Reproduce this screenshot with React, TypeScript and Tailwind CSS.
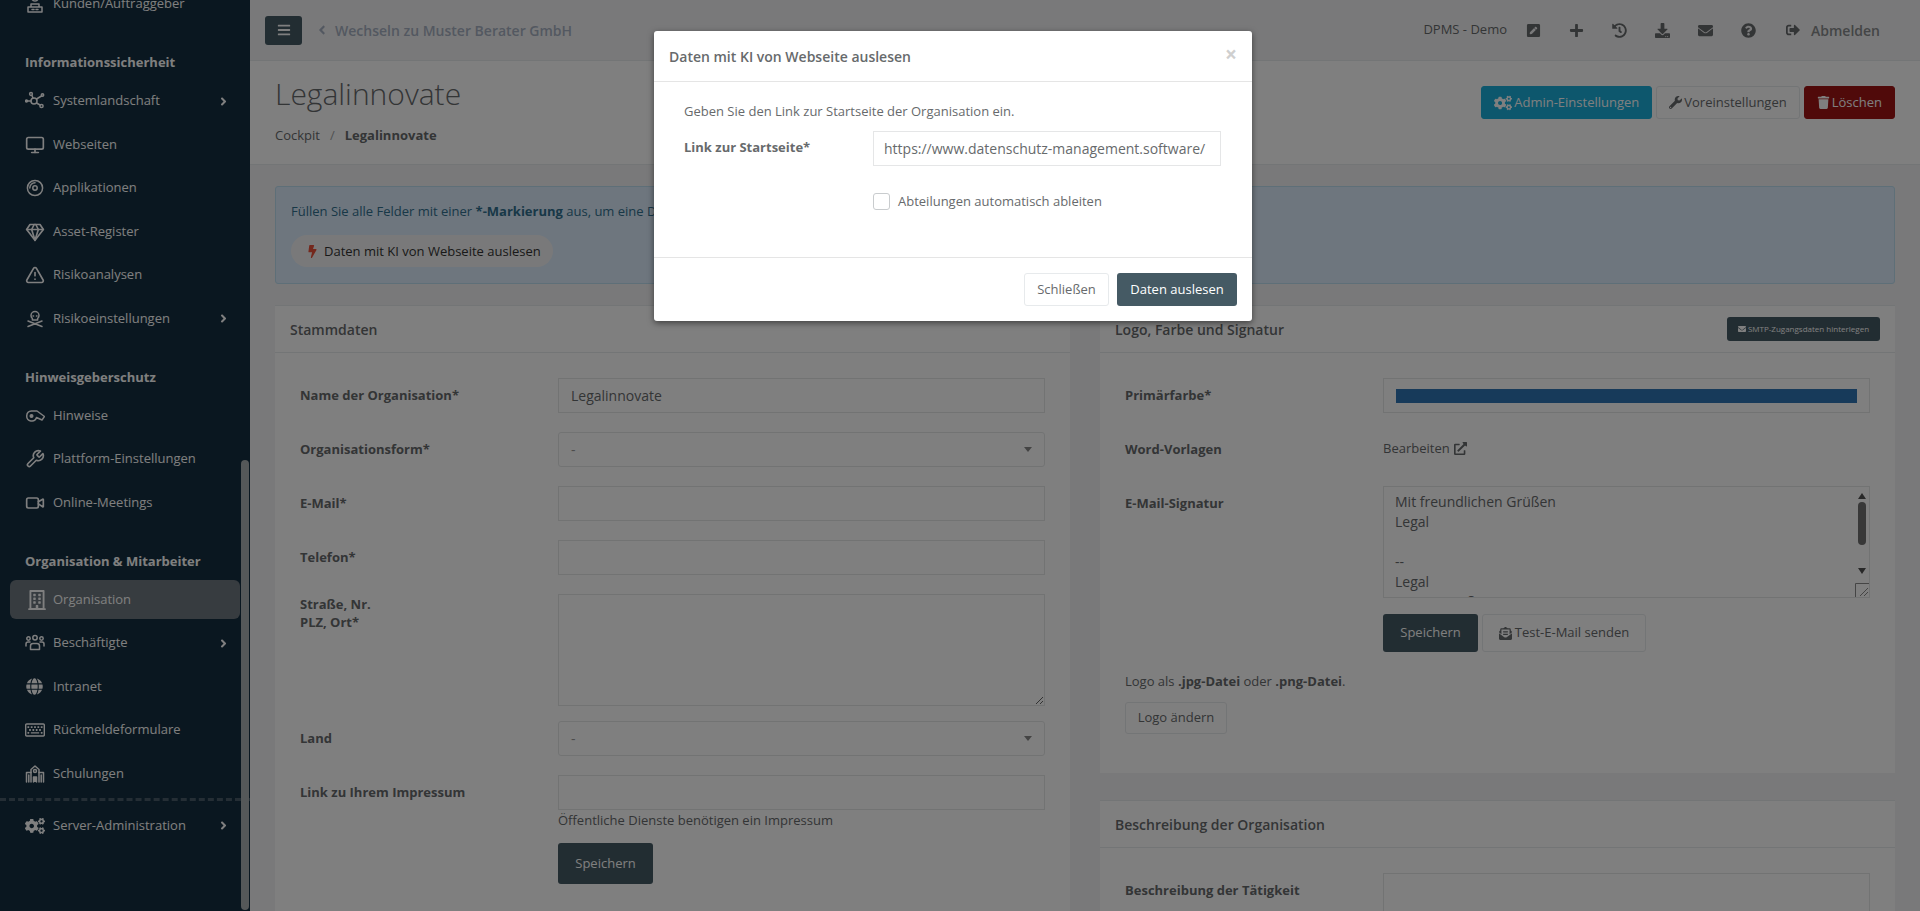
import React from "react";
import {
  FaBars, FaAngleLeft, FaAngleRight, FaPlus, FaHistory, FaDownload, FaEnvelope, FaQuestionCircle,
  FaCogs, FaWrench, FaTrash, FaBolt, FaEnvelopeOpenText, FaPenSquare, FaGlobe, FaRegKeyboard,
  FaSignOutAlt, FaExternalLinkAlt, FaRegBuilding,
} from "react-icons/fa";
import { LuMonitor, LuGem, LuTriangleAlert, LuWrench, LuVideo } from "react-icons/lu";

const S = (p: { children: React.ReactNode }) => (
  <svg width="20" height="20" viewBox="0 0 20 20" fill="none" stroke="currentColor" strokeWidth="1.5" strokeLinecap="round" strokeLinejoin="round">{p.children}</svg>
);
const IconNetwork = () => (
  <S>
    <circle cx="9" cy="10" r="3" /><circle cx="6" cy="3" r="1.4" /><circle cx="17.5" cy="4" r="1.2" /><circle cx="16.5" cy="15" r="1.6" /><circle cx="1.5" cy="10" r="1" fill="currentColor" />
    <path d="M7 4.5 8 7.2M11.5 8 16.5 5M11.500 12l3.600 2M2.500 10H6" />
  </S>
);
const IconDisc = () => (
  <S><circle cx="10" cy="10" r="7.6" /><circle cx="10" cy="10" r="2.2" /><path d="M4.8 10A5.2 5.2 0 0 1 10 4.8" /></S>
);
const IconSkull = () => (
  <S>
    <path d="M6 6.5a4 4 0 0 1 8 0c0 1.600-.7 2.400-1.400 3v1.400H7.400V9.500C6.700 8.900 6 8.100 6 6.500Z" />
    <path d="M8 7h.5M11.500 7h.5M3 12l14 5.500M17 12 3 17.500" />
  </S>
);
const IconWhistle = () => (
  <S>
    <path d="M6.500 5H12l7.500 5.500L17 14l-5.500-2.500A5 5 0 1 1 6.500 5Z" />
    <circle cx="6.500" cy="10" r="1.300" fill="currentColor" />
  </S>
);
const IconSchool = () => (
  <S>
    <path d="M6 18V5.500L10 2l4 3.500V18" /><circle cx="10" cy="7" r="1.500" /><path d="M1.500 18V8.500H6M18.500 18V8.500H14M3.800 11v7M16.200 11v7" /><path d="M8.500 18v-5h3v5" fill="currentColor" />
  </S>
);
const IconClients = () => (
  <S><circle cx="10" cy="4" r="3" /><path d="M3 13h14v5H3zM6 13v-3h8v3M7 15.500h2M11 15.500h2" /></S>
);
const IconPeople = () => (
  <S>
    <circle cx="3.500" cy="5.500" r="1.700" /><circle cx="10" cy="4.800" r="2.200" /><circle cx="16.500" cy="5.500" r="1.700" />
    <path d="M5.500 16.500v-3.500a2.500 2.500 0 0 1 2.500-2.500h4a2.500 2.500 0 0 1 2.500 2.500v3.500ZM1 13v-2a2 2 0 0 1 2-2h2M19 13v-2a2 2 0 0 0-2-2h-2" />
  </S>
);

type Item = { icon: React.ReactNode; label: string; more?: boolean; active?: boolean };

function NavItem({ icon, label, more, active }: Item) {
  return (
    <div className={`mx-[10px] mb-[4.5px] flex h-[39px] items-center rounded-md pl-[15px] pr-[10px] text-[13px] text-white ${active ? "bg-[#6e7880]" : ""}`}>
      <span className="flex w-[28px] shrink-0 items-center text-[20px]">{icon}</span>
      <span className="flex-1 whitespace-nowrap">{label}</span>
      {more && <FaAngleRight className="text-[13px]" />}
    </div>
  );
}

function NavHead({ children }: { children: React.ReactNode }) {
  return <div className="mb-[9.5px] ml-[25px] mt-[28.5px] h-[20px] text-[13px] font-bold leading-[20px] text-white">{children}</div>;
}

function Sidebar() {
  return (
    <aside className="relative h-full w-[250px] shrink-0 overflow-hidden bg-[#142e40]">
      <div className="-mt-[15.5px]">
        <NavItem icon={<IconClients />} label="Kunden/Auftraggeber" />
        <NavHead>Informationssicherheit</NavHead>
        <NavItem icon={<IconNetwork />} label="Systemlandschaft" more />
        <NavItem icon={<LuMonitor />} label="Webseiten" />
        <NavItem icon={<IconDisc />} label="Applikationen" />
        <NavItem icon={<LuGem />} label="Asset-Register" />
        <NavItem icon={<LuTriangleAlert />} label="Risikoanalysen" />
        <NavItem icon={<IconSkull />} label="Risikoeinstellungen" more />
        <NavHead>Hinweisgeberschutz</NavHead>
        <NavItem icon={<IconWhistle />} label="Hinweise" />
        <NavItem icon={<LuWrench />} label="Plattform-Einstellungen" />
        <NavItem icon={<LuVideo />} label="Online-Meetings" />
        <NavHead>Organisation &amp; Mitarbeiter</NavHead>
        <NavItem icon={<FaRegBuilding className="ml-[2px]" />} label="Organisation" active />
        <NavItem icon={<IconPeople />} label="Beschäftigte" more />
        <NavItem icon={<FaGlobe className="ml-[1px] text-[17px]" />} label="Intranet" />
        <NavItem icon={<FaRegKeyboard />} label="Rückmeldeformulare" />
        <NavItem icon={<IconSchool />} label="Schulungen" />
        <div className="mb-[5px] mt-[5px] border-t-[3px] border-dashed border-[#4a5d6a]" />
        <NavItem icon={<FaCogs />} label="Server-Administration" more />
      </div>
      <div className="absolute bottom-[1px] right-[1px] top-[460px] w-[8px] rounded-full bg-[#aab0b2]" />
    </aside>
  );
}

function TopNav() {
  const ic = "text-[15px]";
  return (
    <header className="flex h-[61px] shrink-0 items-center border-b border-[#e7eaec] bg-[#f3f3f4] pl-[15px] pr-[40px] text-[#676a6c]">
      <button className="flex h-[29px] w-[37px] items-center justify-center rounded-[3px] bg-[#455a64] text-[14px] text-white"><FaBars /></button>
      <FaAngleLeft className="ml-[13px] text-[14px] text-[#a7b1c2]" />
      <span className="ml-[6px] text-[14px] font-semibold text-[#a7b1c2]">Wechseln zu Muster Berater GmbH</span>
      <div className="ml-auto flex items-center">
        <span className="mr-[19px] text-[13px]">DPMS - Demo</span>
        <div className="flex items-center gap-[28px]">
          <FaPenSquare className={ic} /><FaPlus className={ic} /><FaHistory className={ic} /><FaDownload className={ic} /><FaEnvelope className={ic} /><FaQuestionCircle className={ic} />
        </div>
        <FaSignOutAlt className="ml-[30px] text-[14px]" />
        <span className="ml-[11px] text-[14px] font-semibold text-[#888b8d]">Abmelden</span>
      </div>
    </header>
  );
}

function PageHead() {
  const b = "flex h-[33px] items-center gap-[2px] rounded-[3px] border px-[12px] text-[13px]";
  return (
    <section className="flex h-[104px] shrink-0 justify-between border-b border-[#e7eaec] bg-white pl-[25px] pr-[25px] text-[#676a6c]">
      <div>
        <h1 className="mt-[12px] text-[30px] font-light leading-[42px]">Legalinnovate</h1>
        <div className="mt-[10px] flex text-[13px] leading-[20px]">
          <span>Cockpit</span><span className="mx-[10px] text-[#a0a3a5]">/</span><b className="font-bold">Legalinnovate</b>
        </div>
      </div>
      <div className="mt-[25px] flex gap-[4px]">
        <button className={`${b} border-[#1aaeda] bg-[#1aaeda] text-white`}><FaCogs className="text-[18px]" />Admin-Einstellungen</button>
        <button className={`${b} border-[#e7eaec] bg-white`}><FaWrench className="text-[13px]" />Voreinstellungen</button>
        <button className={`${b} border-[#a01414] bg-[#a01414] text-white`}><FaTrash className="text-[13px]" />Löschen</button>
      </div>
    </section>
  );
}

const inputCls = "block h-[35px] w-full border border-[#e5e6e7] bg-white px-[12px] text-[14px] text-[#676a6c] outline-none";

function Row({ label, children, cls = "mb-[19px]", labelCls = "pt-[7px] leading-[20px]" }: { label: React.ReactNode; children: React.ReactNode; cls?: string; labelCls?: string }) {
  return (
    <div className={`flex ${cls}`}>
      <label className={`w-[258px] shrink-0 text-[13px] font-bold text-[#676a6c] ${labelCls}`}>{label}</label>
      <div className="min-w-0 flex-1">{children}</div>
    </div>
  );
}

function Select() {
  return (
    <div className="flex h-[35px] items-center justify-between rounded-[3px] border border-[#e5e6e7] bg-white pl-[12px] pr-[12px] text-[14px] text-[#999]">
      <span>-</span>
      <span className="h-0 w-0 border-x-[4px] border-t-[5px] border-x-transparent border-t-[#888]" />
    </div>
  );
}

const darkBtn = "flex items-center justify-center rounded-[3px] bg-[#455a64] text-[13px] text-white";

function Panel({ title, action, children, cls = "" }: { title: string; action?: React.ReactNode; children: React.ReactNode; cls?: string }) {
  return (
    <section className={`border-t border-[#e7eaec] bg-white ${cls}`}>
      <div className="flex h-[47px] items-center justify-between border-b border-[#e7eaec] pl-[15px] pr-[15px]">
        <h5 className="text-[14px] font-semibold text-[#676a6c]">{title}</h5>
        {action}
      </div>
      {children}
    </section>
  );
}

function LeftCol() {
  return (
    <div className="w-[795px] shrink-0">
      <Panel title="Stammdaten" cls="h-[640px]">
        <div className="pl-[25px] pr-[25px] pt-[25px]">
          <Row label="Name der Organisation*"><input readOnly value="Legalinnovate" className={inputCls} /></Row>
          <Row label="Organisationsform*"><Select /></Row>
          <Row label="E-Mail*"><input readOnly className={inputCls} /></Row>
          <Row label="Telefon*"><input readOnly className={inputCls} /></Row>
          <Row label={<>Straße, Nr.<br />PLZ, Ort*</>} cls="mb-[15px]" labelCls="pt-[1px] leading-[18px]"><textarea readOnly className="block h-[112px] w-full border border-[#e5e6e7] bg-white" /></Row>
          <Row label="Land"><Select /></Row>
          <Row label="Link zu Ihrem Impressum" cls="mb-[13px]">
            <input readOnly className={inputCls} />
            <p className="text-[13px] leading-[20px] text-[#676a6c]">Öffentliche Dienste benötigen ein Impressum</p>
          </Row>
          <div className="ml-[258px]"><button className={`${darkBtn} h-[41px] w-[95px]`}>Speichern</button></div>
        </div>
      </Panel>
    </div>
  );
}

function SignatureBox() {
  return (
    <div className="relative h-[112px]">
      <textarea
        readOnly
        className="block h-full w-full resize-none overflow-hidden border border-[#e5e6e7] bg-white pb-[5px] pl-[11px] pr-[20px] pt-[5px] text-[14px] leading-[20px] text-[#676a6c] outline-none"
        value={"Mit freundlichen Grüßen\nLegal\n\n--\nLegal\nmusterstraße 1\n12345 Musterstadt\nDeutschland"}
      />
      <div className="absolute bottom-[1px] right-[1px] top-[1px] flex w-[14px] flex-col items-center bg-white pt-[6px]">
        <span className="h-0 w-0 border-x-[4px] border-b-[6px] border-x-transparent border-b-[#505050]" />
        <span className="mt-[3px] h-[43px] w-[8px] rounded-full bg-[#707070]" />
        <span className="mt-[23px] h-0 w-0 border-x-[4px] border-t-[6px] border-x-transparent border-t-[#505050]" />
        <svg width="14" height="14" viewBox="0 0 14 14" className="mt-auto" stroke="#8a8a8a" strokeWidth="1" fill="none">
          <path d="M0.500 14V0.500H14M13 5 5 13M13 9l-4 4" />
        </svg>
      </div>
    </div>
  );
}

function RightCol() {
  return (
    <div className="w-[795px] shrink-0">
      <Panel
        title="Logo, Farbe und Signatur"
        cls="h-[468px]"
        action={<button className="flex h-[24px] w-[153px] items-center justify-center gap-[2px] rounded-[3px] bg-[#455a64] text-[8px] text-white"><FaEnvelope className="text-[8px]" />SMTP-Zugangsdaten hinterlegen</button>}
      >
        <div className="pl-[25px] pr-[25px] pt-[25px]">
          <Row label="Primärfarbe*">
            <div className="flex h-[35px] items-center border border-[#e5e6e7] px-[12px]"><div className="h-[14px] w-full bg-[#2e74b4]" /></div>
          </Row>
          <Row label="Word-Vorlagen">
            <div className="flex h-[33px] items-center gap-[4px] text-[13px] text-[#676a6c]">Bearbeiten <FaExternalLinkAlt className="text-[13px]" /></div>
          </Row>
          <Row label="E-Mail-Signatur" cls="mb-[15px] pt-[2px]">
            <SignatureBox />
            <div className="mt-[16px] flex gap-[4px]">
              <button className={`${darkBtn} h-[38px] w-[95px]`}>Speichern</button>
              <button className="flex h-[38px] w-[164px] items-center justify-center gap-[3px] rounded-[3px] border border-[#e7eaec] bg-white text-[13px] text-[#676a6c]"><FaEnvelopeOpenText className="text-[13px]" />Test-E-Mail senden</button>
            </div>
          </Row>
          <p className="mt-[19px] text-[13px] leading-[20px] text-[#676a6c]">Logo als <b>.jpg-Datei</b> oder <b>.png-Datei</b>.</p>
          <button className="mt-[11px] h-[32px] w-[102px] rounded-[3px] border border-[#e7eaec] bg-white text-[13px] text-[#676a6c]">Logo ändern</button>
        </div>
      </Panel>
      <Panel title="Beschreibung der Organisation" cls="mt-[27px] h-[200px]">
        <div className="pl-[25px] pr-[25px] pt-[25px]">
          <Row label="Beschreibung der Tätigkeit"><textarea readOnly className="block h-[112px] w-full border border-[#e5e6e7] bg-white" /></Row>
        </div>
      </Panel>
    </div>
  );
}

function Modal() {
  return (
    <div className="absolute left-[654px] top-[31px] h-[290px] w-[598px] rounded-[3px] bg-white text-[#676a6c] shadow-[0_2px_6px_rgba(0,0,0,0.5)]">
      <div className="flex h-[51px] items-center justify-between border-b border-[#e5e5e5] pl-[15px] pr-[15px]">
        <h4 className="text-[14px] font-semibold">Daten mit KI von Webseite auslesen</h4>
        <span className="-mt-[4px] text-[21px] font-bold leading-none text-[#cfcfcf]">×</span>
      </div>
      <div className="h-[175px] pl-[30px] pr-[30px] pt-[19px]">
        <p className="text-[13px] leading-[20px]">Geben Sie den Link zur Startseite der Organisation ein.</p>
        <div className="mt-[10px] flex">
          <label className="w-[189px] shrink-0 pt-[6px] text-[13px] font-bold leading-[20px]">Link zur Startseite*</label>
          <input readOnly value="https://www.datenschutz-management.software/" className="h-[35px] w-[348px] border border-[#e5e6e7] bg-white pl-[10px] pr-[6px] text-[14px] text-[#676a6c] outline-none" />
        </div>
        <div className="ml-[189px] mt-[26px] flex items-center gap-[8px] text-[13px]">
          <span className="h-[17px] w-[17px] rounded-[3px] border border-[#c9ccce] bg-white" />
          <span>Abteilungen automatisch ableiten</span>
        </div>
      </div>
      <div className="flex h-[64px] items-center justify-end gap-[8px] border-t border-[#e5e5e5] pr-[15px]">
        <button className="h-[33px] w-[85px] rounded-[3px] border border-[#e7eaec] bg-white text-[13px]">Schließen</button>
        <button className={`${darkBtn} h-[33px] w-[120px]`}>Daten auslesen</button>
      </div>
    </div>
  );
}

export default function App() {
  return (
    <div className="relative flex h-[911px] w-[1920px] overflow-hidden bg-[#f3f3f4] font-['Open_Sans',sans-serif]">
      <Sidebar />
      <main className="flex min-w-0 flex-1 flex-col">
        <TopNav />
        <PageHead />
        <div className="pl-[25px] pr-[25px] pt-[21px]">
          <div className="h-[98px] rounded-[3px] border border-[#bcdff0] bg-[#dcecfc] pl-[15px] pt-[14px] text-[13px] leading-[20px] text-[#31708f]">
            <p>Füllen Sie alle Felder mit einer <b>*-Markierung</b> aus, um eine Datenschutz-Dokumentation zu erstellen.</p>
            <div className="mt-[14px] flex h-[32px] w-[262px] items-center gap-[5px] rounded-full bg-[#f3f3f4] pl-[15px] text-[13px] text-[#333]">
              <FaBolt className="text-[13px] text-[#e8503a]" />Daten mit KI von Webseite auslesen
            </div>
          </div>
          <div className="mt-[21px] flex justify-between">
            <LeftCol />
            <RightCol />
          </div>
        </div>
      </main>
      <div className="absolute inset-0 bg-black/50" />
      <Modal />
    </div>
  );
}
